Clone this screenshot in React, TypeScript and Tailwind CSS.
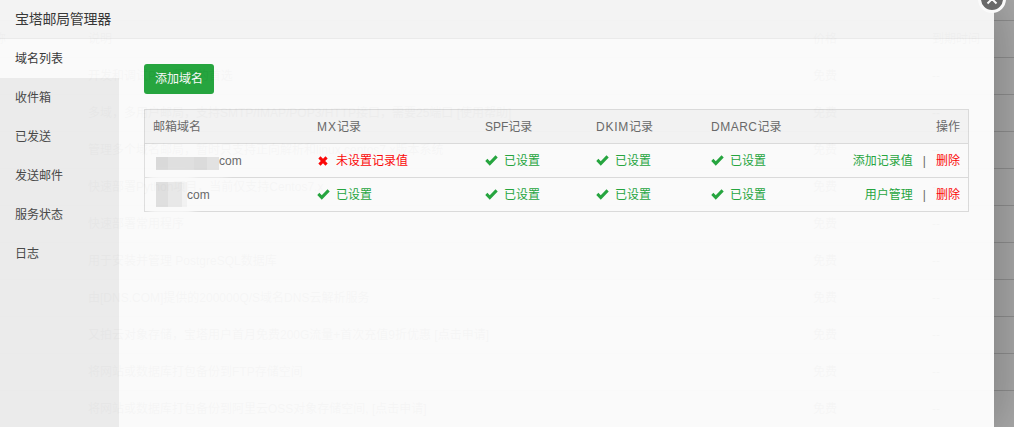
const ghostRows = [
  "开发和调试PHP程序的首选",
  "多域，多用户邮局，支持SMTP/IMAP/POP3/HTTP接口，需要25端口 [使用帮助]",
  "管理多个域名邮局，暂时只支持正向解析和linux centos7.x版本系统",
  "快速部署Python项目，当前仅支持Centos7.x",
  "快速部署常用程序",
  "用于安装并管理 PostgreSQL数据库",
  "由[DNS.COM]提供的200000Q/S域名DNS云解析服务",
  "又拍云对象存储，宝塔用户首月免费200G流量+首次充值9折优惠 [点击申请]",
  "将网站或数据库打包备份到FTP存储空间",
  "将网站或数据库打包备份到阿里云OSS对象存储空间, [点击申请]",
];

const font = "font-['Liberation_Sans','Noto_Sans_CJK_SC',sans-serif]";
const cols = "grid grid-cols-[164px_168px_111px_115px_115px_1fr] items-center px-[8px]";

function Check() {
  return (
    <svg viewBox="0 0 14 12" className="mr-[6px] h-[11px] w-[13px] shrink-0 fill-[#20a53a]">
      <path d="M0.2 6.6 2.5 4.2 5.1 6.9 11.4 0.4 13.8 2.8 5.1 11.6Z" />
    </svg>
  );
}

function Cross() {
  return (
    <svg viewBox="0 0 12 12" className="ml-[1px] mr-[8px] h-[10px] w-[10px] shrink-0 fill-[#ff0000]">
      <path d="M0.4 3 3 0.4 6 3.4 9 0.4 11.6 3 8.6 6 11.6 9 9 11.6 6 8.6 3 11.6 0.4 9 3.4 6Z" />
    </svg>
  );
}

function Done() {
  return (
    <span className="flex items-center text-[#20a53a]">
      <Check />
      已设置
    </span>
  );
}

function Actions({ label }: { label: string }) {
  return (
    <span className="flex items-center justify-end">
      <span className="text-[#20a53a]">{label}</span>
      <span className="mx-[10px] text-[#666]">|</span>
      <span className="text-[#ff0000]">删除</span>
    </span>
  );
}

export default function App() {
  return (
    <div className={`relative h-[427px] w-[1014px] overflow-hidden bg-[#a8a8a8] text-xs ${font}`}>
      <div className="h-[21px] border-b border-[#8e8e8e]" />
      <div className="flex h-[37px] items-center border-b border-[#8e8e8e] text-[#444]">
        <span className="ml-[-6px] w-[94px]">称</span>
        <span className="w-[725px]">说明</span>
        <span className="w-[119px]">价格</span>
        <span>到期时间</span>
      </div>
      {ghostRows.map((text) => (
        <div key={text} className="flex h-[37px] items-center border-b border-[#8e8e8e] text-[#444]">
          <span className="ml-[88px] w-[725px] whitespace-nowrap">{text}</span>
          <span className="w-[119px]">免费</span>
          <span>--</span>
        </div>
      ))}

      <div className="absolute inset-y-0 left-0 w-[994px] opacity-95 shadow-[1px_1px_50px_rgba(0,0,0,0.3)]">
        <div className="flex h-full flex-col bg-white">
          <div className="flex h-[39px] shrink-0 items-center border-b border-[#eeeeee] bg-[#f8f8f8] pl-[15px] text-sm tracking-[-0.3px] text-[#333]">
            宝塔邮局管理器
          </div>
          <div className="flex min-h-0 flex-1">
            <nav className="w-[119px] shrink-0 bg-[#efefef] text-[#444]">
              <div className="flex h-[39px] items-center bg-white pl-[15px] text-[#333]">域名列表</div>
              {["收件箱", "已发送", "发送邮件", "服务状态", "日志"].map((item) => (
                <div key={item} className="flex h-[39px] items-center pl-[15px]">
                  {item}
                </div>
              ))}
            </nav>
            <main className="min-w-0 flex-1 px-[25px] pt-[25px]">
              <button className="block h-[30px] w-[70px] rounded-[3px] bg-[#20a53a] text-center text-white">
                添加域名
              </button>
              <div className="mt-[15px] w-[825px] border border-[#dddddd] text-[#666]">
                <div className={`${cols} h-[34px] border-b border-[#dddddd] bg-[#f6f6f6]`}>
                  <span>邮箱域名</span>
                  <span>
                    <span className="tracking-[1px]">MX</span>记录
                  </span>
                  <span>SPF记录</span>
                  <span>
                    <span className="tracking-[0.75px]">DKIM</span>记录
                  </span>
                  <span>
                    <span className="tracking-[0.5px]">DMARC</span>记录
                  </span>
                  <span className="text-right">操作</span>
                </div>
                <div className={`${cols} h-[34px] border-b border-[#dddddd]`}>
                  <span className="flex items-center">
                    <span className="ml-[3px] mt-[5px] grid h-[13px] w-[63px] grid-cols-[12px_26px_13px_12px] rounded-[1px] shadow-[0_0_9px_7px_#ffffff]">
                      <i className="bg-[#dcdcdc]" />
                      <i className="bg-[#e2e2e2]" />
                      <i className="bg-[#dedede]" />
                      <i className="bg-[#e6e6e6]" />
                    </span>
                    com
                  </span>
                  <span className="flex items-center text-[#ff0000]">
                    <Cross />
                    未设置记录值
                  </span>
                  <Done />
                  <Done />
                  <Done />
                  <Actions label="添加记录值" />
                </div>
                <div className={`${cols} h-[33px]`}>
                  <span className="flex items-center">
                    <span className="ml-[3px] grid h-[25px] w-[31px] grid-cols-[12px_14px_5px] rounded-[1px] shadow-[0_0_9px_7px_#ffffff]">
                      <i className="bg-[#e2e2e2]" />
                      <i className="bg-[#ececec]" />
                      <i className="bg-[#f6f6f6]" />
                    </span>
                    com
                  </span>
                  <Done />
                  <Done />
                  <Done />
                  <Done />
                  <Actions label="用户管理" />
                </div>
              </div>
            </main>
          </div>
        </div>
        <button className="absolute right-[-12px] top-[-15px] flex h-[28px] w-[28px] items-center justify-center rounded-full border-[3px] border-white bg-[#666]">
          <svg viewBox="0 0 12 12" className="h-[12px] w-[12px] fill-none stroke-white stroke-2">
            <path d="M1.5 1.5 10.5 10.5M10.5 1.5 1.5 10.5" />
          </svg>
        </button>
      </div>
    </div>
  );
}
